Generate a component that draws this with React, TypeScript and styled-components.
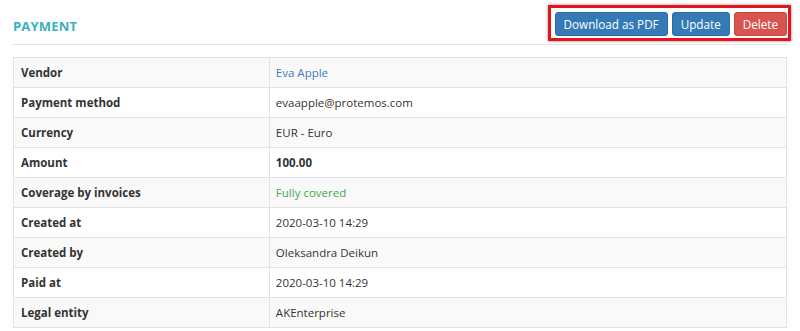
import React from "react";
import styled, { createGlobalStyle } from "styled-components";

const GlobalStyle = createGlobalStyle`
  body {
    margin: 0;
    background: #ffffff;
    font-family: "Open Sans", "Liberation Sans", sans-serif;
    font-size: 11.5px;
    color: #333333;
  }
`;

const Page = styled.div`
  padding: 0 13px;
`;

const Header = styled.div`
  height: 44px;
  display: flex;
  align-items: center;
  justify-content: space-between;
  border-bottom: 1px solid #e3e3e3;
  margin-bottom: 12px;
`;

const Title = styled.h1`
  margin: 8px 0 0;
  font-size: 13px;
  font-weight: 700;
  color: #3ab1c2;
  letter-spacing: 0.2px;
`;

// red annotation box drawn around the action buttons
const Highlight = styled.div`
  margin: 2px -4px 0 0;
  padding: 4px 1px 2px 4px;
  border: 3px solid #e3141b;
  box-shadow: 0 0 3px rgb(0 0 0 / 45%);
`;

const ButtonGroup = styled.div`
  display: flex;
  gap: 4px;
`;

const Button = styled.button<{ $variant: "primary" | "danger" }>`
  height: 24px;
  padding: 0 8px;
  border: 1px solid
    ${({ $variant }) => ($variant === "danger" ? "#d43f3a" : "#2e6da4")};
  border-radius: 3px;
  background: ${({ $variant }) =>
    $variant === "danger" ? "#d9534f" : "#337ab7"};
  color: #ffffff;
  font-family: "Open Sans", "Liberation Sans", sans-serif;
  font-size: 11.7px;
  line-height: 22px;
  cursor: pointer;
`;

const Table = styled.table`
  width: 100%;
  border-collapse: collapse;
  border: 1px solid #e3e3e3;

  tr:nth-child(odd) {
    background: #f9f9f9;
  }
`;

const Row = styled.tr`
  height: 30px;
`;

const Label = styled.th`
  width: 33.1%;
  padding: 0 7px;
  text-align: left;
  font-weight: 700;
  color: #333333;
  border-top: 1px solid #e3e3e3;
  border-right: 1px solid #e3e3e3;
`;

const Value = styled.td<{ $tone?: "link" | "success" | "strong" }>`
  padding: 0 6px;
  border-top: 1px solid #e3e3e3;
  color: ${({ $tone }) =>
    $tone === "link" ? "#3f7bbf" : $tone === "success" ? "#47a64a" : "#333333"};
  font-weight: ${({ $tone }) => ($tone === "strong" ? 700 : 400)};
`;

const rows: { label: string; value: string; tone?: "link" | "success" | "strong" }[] = [
  { label: "Vendor", value: "Eva Apple", tone: "link" },
  { label: "Payment method", value: "evaapple@protemos.com" },
  { label: "Currency", value: "EUR - Euro" },
  { label: "Amount", value: "100.00", tone: "strong" },
  { label: "Coverage by invoices", value: "Fully covered", tone: "success" },
  { label: "Created at", value: "2020-03-10 14:29" },
  { label: "Created by", value: "Oleksandra Deikun" },
  { label: "Paid at", value: "2020-03-10 14:29" },
  { label: "Legal entity", value: "AKEnterprise" },
];

const App = () => {
  return (
    <>
      <GlobalStyle />
      <Page>
        <Header>
          <Title>PAYMENT</Title>
          <Highlight>
            <ButtonGroup>
              <Button $variant="primary">Download as PDF</Button>
              <Button $variant="primary">Update</Button>
              <Button $variant="danger">Delete</Button>
            </ButtonGroup>
          </Highlight>
        </Header>
        <Table>
          <tbody>
            {rows.map((row) => (
              <Row key={row.label}>
                <Label>{row.label}</Label>
                <Value $tone={row.tone}>{row.value}</Value>
              </Row>
            ))}
          </tbody>
        </Table>
      </Page>
    </>
  );
};

export default App;
